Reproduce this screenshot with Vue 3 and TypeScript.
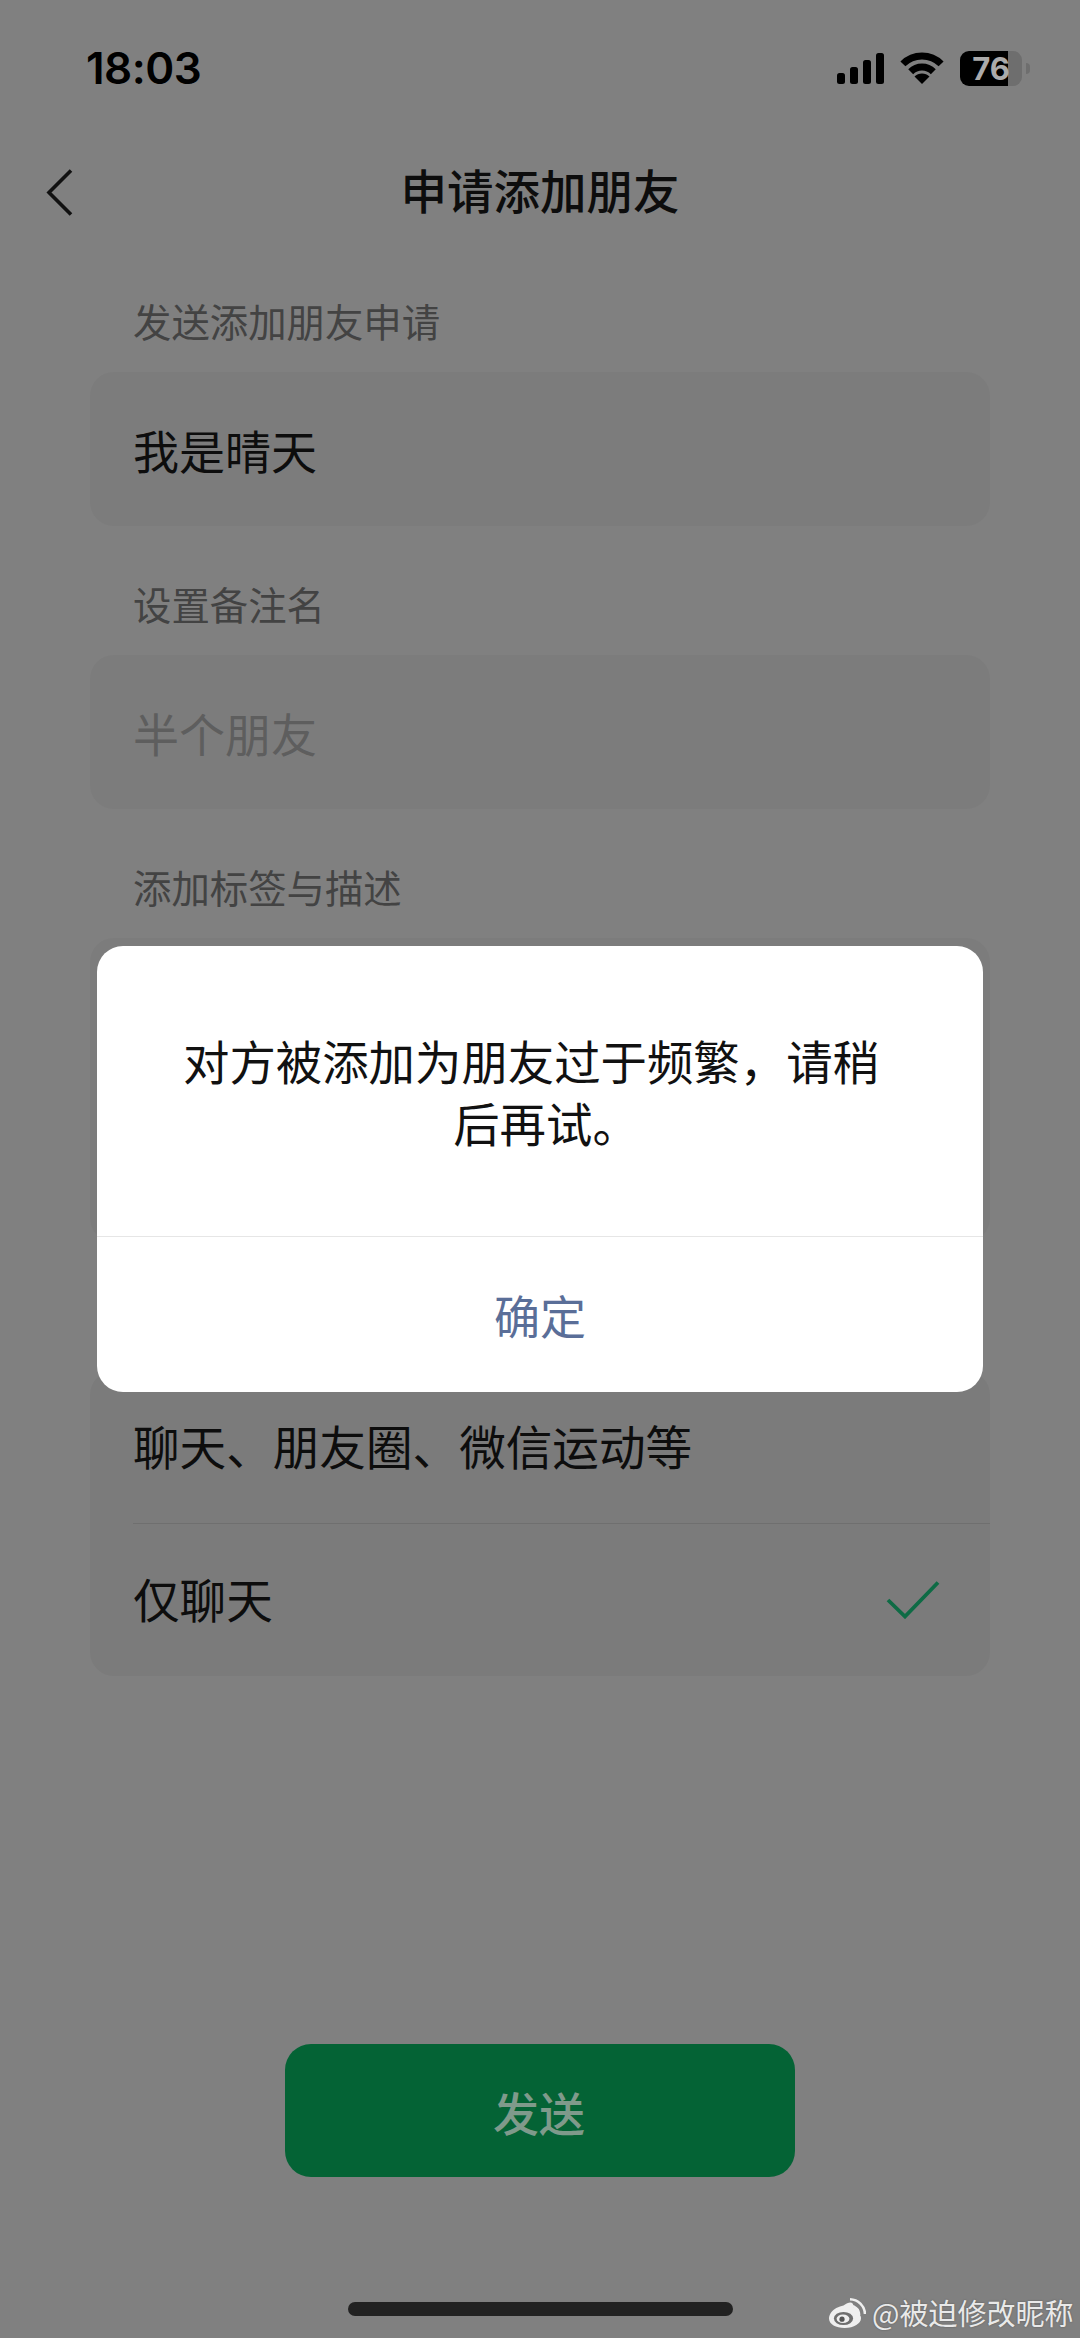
<script setup lang="ts">
const message = '对方被添加为朋友过于频繁\uFF0C请稍后再试。'
</script>

<template>
  <div class="page">
    <header class="status">
      <span class="time">18:03</span>
      <div class="status-icons">
        <svg class="signal" width="47" height="31" viewBox="0 0 47 31" fill="#000">
          <rect x="0" y="20" width="8" height="11" rx="2.5" />
          <rect x="13" y="14" width="8" height="17" rx="2.5" />
          <rect x="26" y="7" width="8" height="24" rx="2.5" />
          <rect x="39" y="0" width="8" height="31" rx="2.5" />
        </svg>
        <svg class="wifi" width="44" height="32" viewBox="0 0 44 32" fill="none" stroke="#000" stroke-width="7">
          <path d="M2.9 11.9A27 27 0 0 1 41.1 11.9" />
          <path d="M10.7 19.7A16 16 0 0 1 33.3 19.7" />
          <path d="M22 32L14.5 24.5A10.6 10.6 0 0 1 29.5 24.5Z" fill="#000" stroke="none" />
        </svg>
        <div class="battery">76</div>
      </div>
    </header>

    <nav class="nav">
      <svg class="back" width="27" height="47" viewBox="0 0 27 47" fill="none" stroke="#111" stroke-width="3.6">
        <path d="M25 1.5L3 23.5L25 45.5" />
      </svg>
      <h1>申请添加朋友</h1>
    </nav>

    <main class="form">
      <section>
        <div class="label">发送添加朋友申请</div>
        <div class="card row-single">我是晴天</div>
      </section>
      <section>
        <div class="label">设置备注名</div>
        <div class="card row-single placeholder">半个朋友</div>
      </section>
      <section>
        <div class="label">添加标签与描述</div>
        <div class="card tall"></div>
      </section>
      <section>
        <div class="label"></div>
        <div class="card lower">
          <div class="row divided"><span>聊天、朋友圈、微信运动等</span></div>
          <div class="row">
            <span>仅聊天</span>
            <svg width="54" height="38" viewBox="0 0 54 38" fill="none" stroke="#0e6b45" stroke-width="3.8">
              <path d="M2 19L19 35.5L52 1.5" />
            </svg>
          </div>
        </div>
      </section>
    </main>

    <button class="send">发送</button>
    <div class="home-bar"></div>

    <div class="dialog">
      <div class="dialog-body"><p>{{ message }}</p></div>
      <div class="dialog-action">确定</div>
    </div>

    <div class="watermark">
      <svg width="38" height="31" viewBox="0 0 38 31">
        <path
          d="M15.5 8.5C19.5 5.5 23 4.8 24.6 6.4C25.6 7.5 25.5 9.4 24.9 11C27.6 10.2 30 10.8 30.8 12.5C31.4 13.8 31 15.2 30 16.6C32 17.6 33 19.2 33 21.2C33 26.3 26 31 16.6 31C8 31 1 27.5 1 21.6C1 17.6 4.2 13.2 8.3 11C10.8 9.7 13.2 8.9 15.5 8.5Z"
          fill="#efefef"
        />
        <ellipse cx="15.5" cy="21.5" rx="9.6" ry="6.6" fill="#6f6f6f" />
        <ellipse cx="15" cy="21.7" rx="6.4" ry="4.3" fill="#efefef" />
        <circle cx="14" cy="22.2" r="2.6" fill="#555" />
        <path d="M21 9.2A8.5 8.5 0 0 1 31 18M22 2.2A15.5 15.5 0 0 1 37 17" fill="none" stroke="#efefef" stroke-width="2.6" />
      </svg>
      <span>@被迫修改昵称</span>
    </div>
  </div>
</template>

<style scoped>
.page {
  position: relative;
  display: flex;
  flex-direction: column;
  width: 1080px;
  height: 2338px;
  overflow: hidden;
  background: #808080;
  color: #0d0d0d;
  font-family: "Noto Sans CJK SC", "Noto Sans", sans-serif;
  font-size: 46px;
}

.status {
  display: flex;
  align-items: center;
  justify-content: space-between;
  height: 136px;
  padding: 0 58px 0 86px;
  box-sizing: border-box;
}

.time {
  font-family: Inter, "Liberation Sans", sans-serif;
  font-size: 44px;
  font-weight: 600;
  letter-spacing: -0.5px;
  color: #000;
}

.status-icons {
  display: flex;
  align-items: center;
  gap: 16px;
}

.battery {
  position: relative;
  width: 62px;
  height: 35px;
  border-radius: 9px;
  background: linear-gradient(90deg, #000 48px, #6e6e6e 48px);
  color: #ababab;
  font-family: Inter, "Liberation Sans", sans-serif;
  font-size: 31px;
  font-weight: 700;
  line-height: 35px;
  text-align: center;
}

.battery::after {
  content: "";
  position: absolute;
  left: 66px;
  top: 12px;
  width: 4px;
  height: 11px;
  border-radius: 0 4px 4px 0;
  background: #6e6e6e;
}

.nav {
  position: relative;
  display: flex;
  align-items: center;
  justify-content: center;
  height: 112px;
}

.nav h1 {
  margin: -6px 0 0;
  font-size: 46.5px;
  font-weight: 500;
  line-height: 60px;
}

.back {
  position: absolute;
  left: 46px;
  top: 33px;
}

.form {
  display: flex;
  flex-direction: column;
  gap: 55px;
  padding: 50px 90px 0;
}

.label {
  height: 45px;
  margin-bottom: 29px;
  color: #434343;
  font-size: 38.4px;
  line-height: 45px;
  padding-left: 43px;
}

.card {
  border-radius: 24px;
  background: #7c7c7c;
}

.card.lower {
  background: #7b7b7b;
}

.row-single {
  height: 154px;
  padding-left: 43px;
  line-height: 154px;
}

.placeholder {
  color: #5e5e5e;
}

.tall {
  height: 304px;
}

.row {
  display: flex;
  align-items: center;
  justify-content: space-between;
  height: 152px;
  margin-left: 43px;
  padding-right: 50px;
  font-size: 46.6px;
}

.row span {
  margin-top: -5px;
}

.divided {
  border-bottom: 1.5px solid #6f6f6f;
}

.send {
  display: block;
  width: 510px;
  height: 133px;
  margin: auto auto 125px;
  padding: 0 2px 0 0;
  border: none;
  border-radius: 26px;
  background: #046335;
  color: #7f9a8b;
  font-family: inherit;
  font-size: 46px;
  font-weight: 500;
}

.home-bar {
  width: 385px;
  height: 14px;
  margin: 0 auto 22px;
  border-radius: 7px;
  background: #222;
}

.dialog {
  position: absolute;
  left: 97px;
  top: 946px;
  width: 886px;
  height: 446px;
  border-radius: 26px;
  background: #fff;
  text-align: center;
  overflow: hidden;
}

.dialog-body {
  display: flex;
  align-items: center;
  justify-content: center;
  height: 291px;
  padding: 0 97px 0 109px;
  box-sizing: border-box;
  border-bottom: 1.5px solid #e6e6e6;
}

.dialog-body p {
  margin: 0;
  font-size: 46.4px;
  line-height: 62px;
  text-indent: -30px;
  color: #111;
}

.dialog-action {
  height: 155px;
  line-height: 155px;
  color: #5a6e98;
}

.watermark {
  position: absolute;
  left: 828px;
  top: 2294px;
  display: flex;
  align-items: center;
  gap: 6px;
  height: 36px;
  color: #e9e9e9;
  font-size: 29px;
  text-shadow: 0 0 2px rgba(0, 0, 0, 0.35);
  white-space: nowrap;
}
</style>
